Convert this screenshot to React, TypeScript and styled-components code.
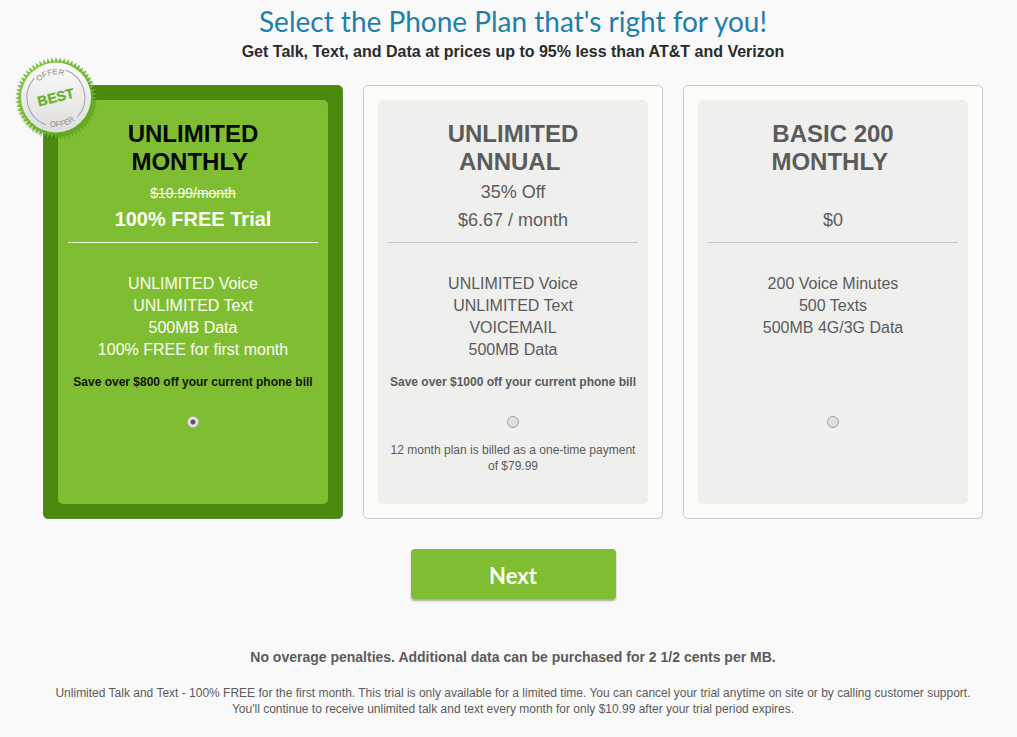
import React, { useState } from 'react';
import styled, { createGlobalStyle, css } from 'styled-components';

const GlobalStyle = createGlobalStyle`
  *, *::before, *::after { box-sizing: border-box; }
  body {
    margin: 0;
    background: #f9f9f9;
    color: #5b5b5b;
    font-family: "Liberation Sans", Arial, sans-serif;
    font-size: 16px;
    line-height: 22px;
  }
  h1, h2, p, ul, fieldset { margin: 0; padding: 0; border: 0; }
  ul { list-style: none; }
`;

const Page = styled.main`
  padding: 4px 0 20px 9px;
  text-align: center;
`;

const Heading = styled.h1`
  color: #1f7fab;
  font-family: Lato, sans-serif;
  font-size: 28px;
  font-weight: 400;
  line-height: 34px;
`;

const Subheading = styled.p`
  margin-top: 3px;
  color: #2b2b2b;
  font-weight: 700;
`;

const Plans = styled.fieldset`
  display: flex;
  flex-wrap: wrap;
  justify-content: center;
  gap: 20px;
  margin: 22px 0 30px;
`;

const Card = styled.label<{ $featured?: boolean }>`
  position: relative;
  display: flex;
  width: 300px;
  min-height: 434px;
  padding: 14px;
  border: 1px solid #c9c9c9;
  border-radius: 5px;
  background: #fcfdf8;
  cursor: pointer;
  ${(p) => p.$featured && css`
    border-color: #5b8a31;
    background: #4b880e;
  `}
`;

const CardBody = styled.div<{ $featured?: boolean }>`
  flex: 1;
  display: flex;
  flex-direction: column;
  align-items: center;
  padding: 20px 10px;
  border-radius: 5px;
  background: ${(p) => (p.$featured ? '#7fbe32' : '#efefee')};
  color: ${(p) => (p.$featured ? '#fdfff2' : '#5b5b5b')};
`;

const PlanName = styled.h2<{ $featured?: boolean }>`
  color: ${(p) => (p.$featured ? '#050800' : '#5b5b5b')};
  font-size: 24px;
  line-height: 28px;
`;

const Price = styled.div`
  align-self: stretch;
  display: flex;
  flex-direction: column;
  justify-content: flex-end;
  min-height: 67px;
  padding-bottom: 8px;
  border-bottom: 1px solid #c8c8c8;
  font-size: 18px;
  line-height: 28px;
`;

const FeaturedPrice = styled(Price)`
  padding-bottom: 10px;
  border-color: #f4fadf;
  font-size: 20px;
  line-height: 26px;
`;

const OldPrice = styled.s`
  font-size: 14px;
`;

const Features = styled.ul`
  min-height: 88px;
  margin-top: 30px;
`;

const Saving = styled.p<{ $featured?: boolean }>`
  min-height: 16px;
  margin-top: 13px;
  color: ${(p) => (p.$featured ? '#101800' : '#5b5b5b')};
  font-size: 12px;
  font-weight: 700;
  line-height: 16px;
  white-space: nowrap;
`;

const Radio = styled.input`
  appearance: none;
  width: 12px;
  height: 12px;
  margin: 26px 0 14px;
  border: 1px solid #a0a0a0;
  border-radius: 50%;
  background: linear-gradient(#e6e6e6, #dadada);
  &:checked {
    border-color: #b3b8ad;
    background: radial-gradient(circle, #555 0 2px, #e4e4e4 3px);
  }
`;

const Note = styled.p`
  font-size: 12px;
  line-height: 16px;
`;

const Badge = styled.svg`
  position: absolute;
  top: -30px;
  left: -30px;
  width: 84px;
  height: 84px;
`;

const NextButton = styled.button`
  display: block;
  width: 205px;
  height: 50px;
  margin: 0 auto;
  padding: 2px 0 0;
  border: 0;
  border-radius: 4px;
  background: #7fbe32;
  box-shadow: 0 2px 2px #a9ada4;
  color: #fdfff2;
  font-family: Lato, sans-serif;
  font-size: 22px;
  font-weight: 700;
  cursor: pointer;
`;

const Overage = styled.p`
  margin-top: 47px;
  font-size: 14px;
  font-weight: 700;
`;

const Terms = styled(Note)`
  max-width: 940px;
  margin: 17px auto 0;
`;

const teeth = Array.from({ length: 120 }, (_, i) => {
  const angle = (i * Math.PI) / 60;
  const radius = i % 2 ? 36 : 41;
  return `${(42 + radius * Math.cos(angle)).toFixed(2)},${(42 + radius * Math.sin(angle)).toFixed(2)}`;
}).join(' ');

function BestOffer() {
  return (
    <Badge viewBox="0 0 84 84" role="img" aria-label="Best offer">
      <defs>
        <linearGradient id="seal" x1="0" y1="0" x2="0" y2="1">
          <stop offset="0" stopColor="#fbfbfb" />
          <stop offset="1" stopColor="#dededc" />
        </linearGradient>
        <linearGradient id="rim" x1="0" y1="0" x2="1" y2="1">
          <stop offset="0" stopColor="#86cc45" />
          <stop offset="1" stopColor="#57a01c" />
        </linearGradient>
        <path id="arcTop" d="M18.5 42 A23.5 23.5 0 0 1 65.5 42" />
        <path id="arcBottom" d="M13 42 A29 29 0 0 0 71 42" />
      </defs>
      <polygon points={teeth} fill="#3c6c10" opacity="0.25" transform="translate(1 2)" />
      <polygon points={teeth} fill="url(#rim)" />
      <circle cx="42" cy="41.5" r="35" fill="url(#seal)" />
      <g transform="rotate(-14 42 42)" fontFamily="Liberation Sans" textAnchor="middle">
        <path
          d="M58.2 17.5 A29 29 0 0 1 58.2 65.5 M25.8 17.5 A29 29 0 0 0 25.8 65.5"
          fill="none"
          stroke="#a3a8b0"
          strokeWidth="1"
        />
        <text fontSize="8" fill="#8f8f8f">
          <textPath href="#arcTop" startOffset="50%">OFFER</textPath>
        </text>
        <text fontSize="8" fill="#8f8f8f">
          <textPath href="#arcBottom" startOffset="50%">OFFER</textPath>
        </text>
        <text x="42" y="46" fontSize="14" fontWeight="700" fill="#65b02e" stroke="#65b02e" strokeWidth="0.3">BEST</text>
      </g>
    </Badge>
  );
}

type Plan = {
  id: string;
  name: [string, string];
  featured?: boolean;
  price: React.ReactNode;
  features: string[];
  saving?: string;
  note?: string;
};

const plans: Plan[] = [
  {
    id: 'monthly',
    name: ['UNLIMITED', 'MONTHLY\u00a0'],
    featured: true,
    price: (
      <FeaturedPrice>
        <OldPrice>$10.99/month</OldPrice>
        <strong>100% FREE Trial</strong>
      </FeaturedPrice>
    ),
    features: ['UNLIMITED Voice', 'UNLIMITED Text', '500MB Data', '100% FREE for first month'],
    saving: 'Save over $800 off your current phone bill',
  },
  {
    id: 'annual',
    name: ['UNLIMITED', 'ANNUAL\u00a0'],
    price: (
      <Price>
        <span>35% Off</span>
        <span>$6.67 / month</span>
      </Price>
    ),
    features: ['UNLIMITED Voice', 'UNLIMITED Text', 'VOICEMAIL', '500MB Data'],
    saving: 'Save over $1000 off your current phone bill',
    note: '12 month plan is billed as a one-time payment of $79.99',
  },
  {
    id: 'basic',
    name: ['BASIC 200', 'MONTHLY\u00a0'],
    price: (
      <Price>
        <span>$0</span>
      </Price>
    ),
    features: ['200 Voice Minutes', '500 Texts', '500MB 4G/3G Data'],
  },
];

export default function App() {
  const [selected, setSelected] = useState('monthly');
  return (
    <Page>
      <GlobalStyle />
      <Heading>Select the Phone Plan that's right for you!</Heading>
      <Subheading>Get Talk, Text, and Data at prices up to 95% less than AT&amp;T and Verizon</Subheading>
      <Plans aria-label="Phone plans">
        {plans.map((plan) => (
          <Card key={plan.id} $featured={plan.featured} htmlFor={plan.id}>
            <CardBody $featured={plan.featured}>
              <PlanName $featured={plan.featured}>
                {plan.name[0]}
                <br />
                {plan.name[1]}
              </PlanName>
              {plan.price}
              <Features>
                {plan.features.map((feature) => (
                  <li key={feature}>{feature}</li>
                ))}
              </Features>
              <Saving $featured={plan.featured}>{plan.saving}</Saving>
              <Radio
                type="radio"
                name="plan"
                id={plan.id}
                checked={selected === plan.id}
                onChange={() => setSelected(plan.id)}
              />
              {plan.note && <Note>{plan.note}</Note>}
            </CardBody>
            {plan.featured && <BestOffer />}
          </Card>
        ))}
      </Plans>
      <NextButton type="button">Next</NextButton>
      <Overage>No overage penalties. Additional data can be purchased for 2 1/2 cents per MB.</Overage>
      <Terms>
        Unlimited Talk and Text - 100% FREE for the first month. This trial is only available for a limited time. You
        can cancel your trial anytime on site or by calling customer support. You'll continue to receive unlimited talk
        and text every month for only $10.99 after your trial period expires.
      </Terms>
    </Page>
  );
}
